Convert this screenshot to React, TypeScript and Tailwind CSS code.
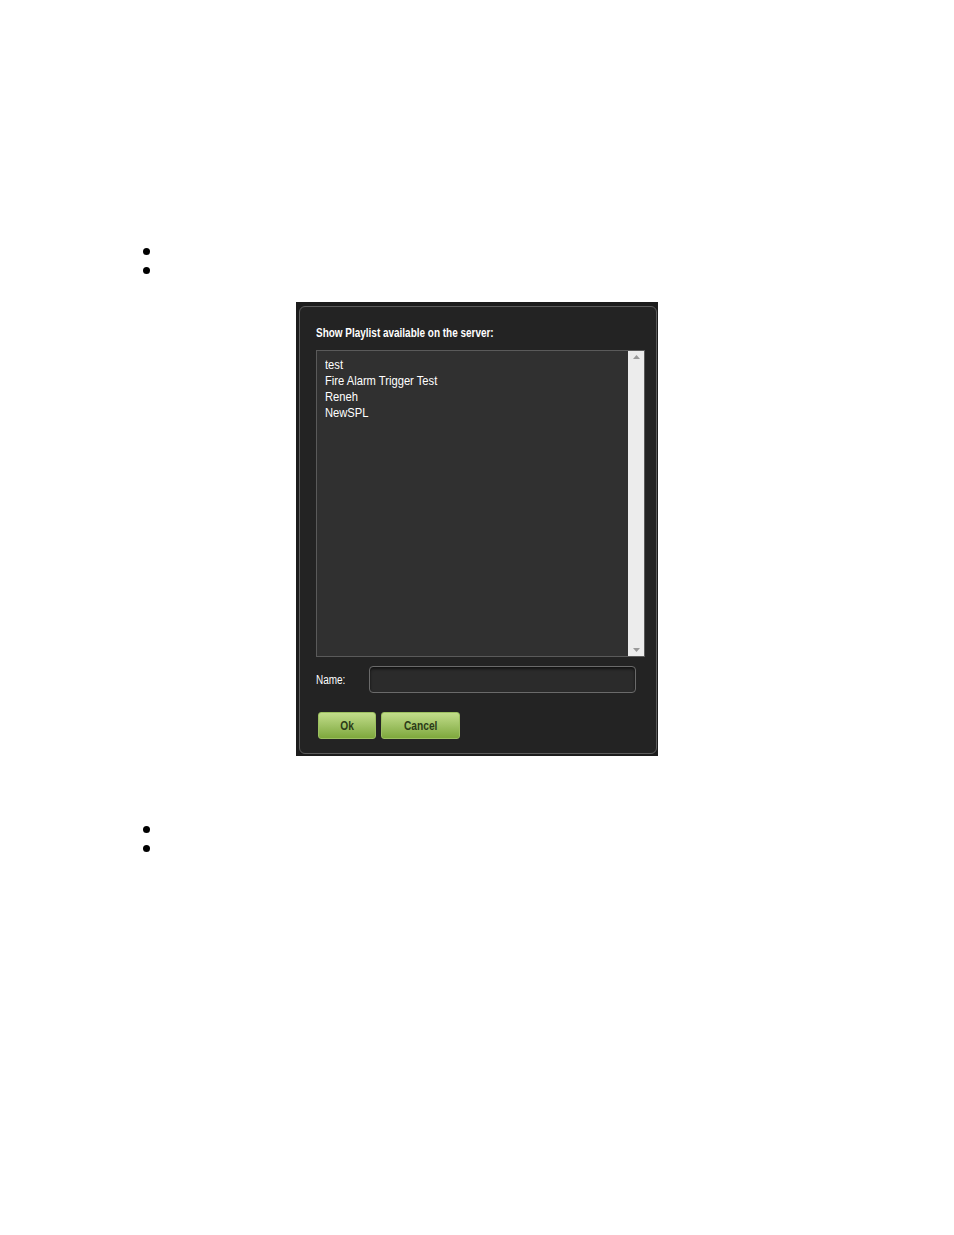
const items = ['test', 'Fire Alarm Trigger Test', 'Reneh', 'NewSPL'];

function Bullets() {
  return (
    <div className="flex flex-col pl-[143px]">
      {[0, 1].map((i) => (
        <div key={i} className="h-[19px] flex items-center">
          <div className="w-[7px] h-[7px] rounded-full bg-black" />
        </div>
      ))}
    </div>
  );
}

export default function App() {
  return (
    <div className="w-[954px] h-[1235px] bg-white font-['Liberation_Sans',sans-serif]">
      <div className="pt-[242px]">
        <Bullets />
      </div>
      <div className="mt-[22px] ml-[296px] w-[362px] h-[454px] bg-[#1c1c1c] pt-[4px] pl-[3px] pr-[1px] pb-[2px]">
        <div className="h-full rounded-[6px] border border-[#5c5c5c] bg-[#232323] flex flex-col px-[16px]">
          <div className="pt-[19px] text-[12px] font-bold text-white leading-[14px] whitespace-nowrap">
            <span className="inline-block origin-left scale-x-[0.83]">Show Playlist available on the server:</span>
          </div>
          <div className="mt-[10px] h-[307px] w-[329px] border border-[#5a5a5a] bg-[#303030] flex">
            <div className="flex-1 pt-[6px] pl-[8px] text-[13px] leading-[16px] text-white">
              {items.map((t) => (
                <div key={t}>
                  <span className="inline-block origin-left scale-x-[0.86]">{t}</span>
                </div>
              ))}
            </div>
            <div className="w-[16px] bg-[#ececec] flex flex-col justify-between items-center py-[4px]">
              <svg width="7" height="4" viewBox="0 0 7 4">
                <path d="M0 4 L3.5 0 L7 4 Z" fill="#9a9a9a" />
              </svg>
              <svg width="7" height="4" viewBox="0 0 7 4">
                <path d="M0 0 L3.5 4 L7 0 Z" fill="#9a9a9a" />
              </svg>
            </div>
          </div>
          <div className="mt-[9px] flex items-center">
            <span className="w-[53px] text-[12px] text-white">
              <span className="inline-block origin-left scale-x-[0.83]">Name:</span>
            </span>
            <div className="w-[267px] h-[27px] rounded-[4px] border border-[#6a6a6a] bg-[#2b2b2b] shadow-[inset_0_2px_3px_rgba(0,0,0,0.6)]" />
          </div>
          <div className="mt-[19px] ml-[2px] flex gap-[5px]">
            <button className="w-[58px] h-[27px] rounded-[3px] bg-gradient-to-b from-[#c2dd8a] to-[#7ea83c] border border-[#9cc060] text-[12px] font-bold text-[#2b3a18]">
              <span className="inline-block scale-x-[0.85]">Ok</span>
            </button>
            <button className="w-[79px] h-[27px] rounded-[3px] bg-gradient-to-b from-[#c2dd8a] to-[#7ea83c] border border-[#9cc060] text-[12px] font-bold text-[#2b3a18]">
              <span className="inline-block scale-x-[0.85]">Cancel</span>
            </button>
          </div>
        </div>
      </div>
      <div className="mt-[64px]">
        <Bullets />
      </div>
    </div>
  );
}
